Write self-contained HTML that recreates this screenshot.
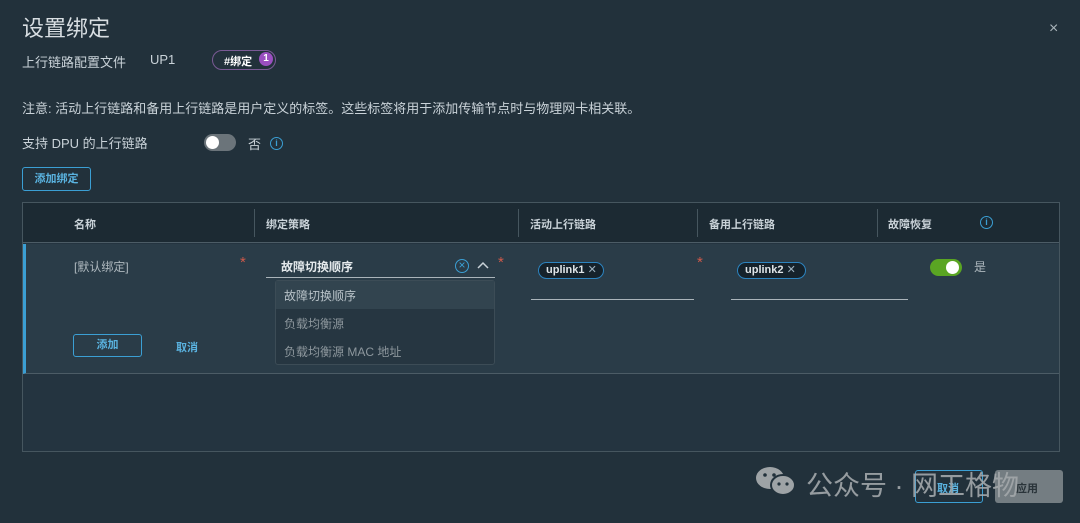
<!DOCTYPE html>
<html><head><meta charset="utf-8"><style>
*{margin:0;padding:0;box-sizing:border-box}
body{width:1080px;height:523px;background:#22313b;font-family:"Liberation Sans","Noto Sans CJK SC",sans-serif;color:#c9d2d8;position:relative;overflow:hidden}
.a{position:absolute;white-space:nowrap}
.b{font-weight:bold}
.s{font-size:15px;color:#d05a4a}
</style></head><body>
<div class="a" style="left:22px;top:11px;font-size:22px;color:#d8dee2">设置绑定</div>
<div class="a" style="left:1049px;top:20px;font-size:16px;color:#aab4ba">×</div>
<div class="a" style="left:22px;top:52px;font-size:13px">上行链路配置文件</div>
<div class="a" style="left:150px;top:52px;font-size:13px">UP1</div>
<div class="a" style="left:212px;top:50px;width:64px;height:20px;border:1.5px solid #7a5a95;border-radius:10px"></div>
<div class="a b" style="left:224px;top:53px;font-size:11px;color:#fff">#绑定</div>
<div class="a b" style="left:259px;top:52px;width:14px;height:14px;border-radius:7px;background:#9a4fc0;color:#fff;font-size:10px;text-align:center;line-height:14px">1</div>
<div class="a" style="left:22px;top:98px;font-size:13px">注意: 活动上行链路和备用上行链路是用户定义的标签。这些标签将用于添加传输节点时与物理网卡相关联。</div>
<div class="a" style="left:22px;top:133px;font-size:13px">支持 DPU 的上行链路</div>
<div class="a" style="left:204px;top:134px;width:32px;height:17px;border-radius:9px;background:#6b747a"></div>
<div class="a" style="left:206px;top:136px;width:13px;height:13px;border-radius:7px;background:#fff"></div>
<div class="a" style="left:248px;top:134px;font-size:13px">否</div>
<div class="a" style="left:270px;top:137px;width:13px;height:13px;border:1.5px solid #3b9fd4;border-radius:7px;color:#3b9fd4;font-size:9px;text-align:center;line-height:10px;font-weight:bold">i</div>
<div class="a b" style="left:22px;top:167px;width:69px;height:24px;border:1px solid #3b9fd4;border-radius:3px;color:#5ab3e0;font-size:11px;text-align:center;line-height:22px">添加绑定</div>

<div class="a" style="left:22px;top:202px;width:1038px;height:250px;border:1px solid #46565f;background:#243440"></div>
<div class="a" style="left:23px;top:203px;width:1036px;height:40px;background:#1c2a33;border-bottom:1px solid #4c5c66"></div>
<div class="a" style="left:254px;top:209px;width:1px;height:28px;background:#46565f"></div>
<div class="a" style="left:518px;top:209px;width:1px;height:28px;background:#46565f"></div>
<div class="a" style="left:697px;top:209px;width:1px;height:28px;background:#46565f"></div>
<div class="a" style="left:877px;top:209px;width:1px;height:28px;background:#46565f"></div>
<div class="a b" style="left:74px;top:216px;font-size:11px">名称</div>
<div class="a b" style="left:266px;top:216px;font-size:11px">绑定策略</div>
<div class="a b" style="left:530px;top:216px;font-size:11px">活动上行链路</div>
<div class="a b" style="left:709px;top:216px;font-size:11px">备用上行链路</div>
<div class="a b" style="left:888px;top:216px;font-size:11px">故障恢复</div>
<div class="a" style="left:980px;top:216px;width:13px;height:13px;border:1.5px solid #3b9fd4;border-radius:7px;color:#3b9fd4;font-size:9px;text-align:center;line-height:10px;font-weight:bold">i</div>

<div class="a" style="left:23px;top:244px;width:1036px;height:130px;background:#2a3c48;border-left:3px solid #3b9fd4;border-bottom:1px solid #4c5c66"></div>
<div class="a" style="left:74px;top:258px;font-size:12px;color:#aeb8be">[默认绑定]</div>
<div class="a s" style="left:240px;top:254px">*</div>
<div class="a b" style="left:281px;top:258px;font-size:12px;color:#e4e9ec">故障切换顺序</div>
<div class="a" style="left:266px;top:277px;width:229px;height:1px;background:#aab4ba"></div>
<div class="a" style="left:455px;top:259px;width:14px;height:14px;border:1.5px solid #3b9fd4;border-radius:7px;color:#3b9fd4;font-size:12px;line-height:11px;text-align:center">×</div>
<svg class="a" style="left:477px;top:261px" width="12" height="8" viewBox="0 0 12 8"><path d="M1 7 L6 2 L11 7" fill="none" stroke="#c9d2d8" stroke-width="1.5"/></svg>
<div class="a s" style="left:498px;top:254px">*</div>
<div class="a" style="left:275px;top:280px;width:220px;height:85px;background:#263641;border:1px solid #3c4c56;border-radius:3px"></div>
<div class="a" style="left:276px;top:281px;width:218px;height:28px;background:#32444f"></div>
<div class="a" style="left:284px;top:287px;font-size:12px;color:#b8c2c8">故障切换顺序</div>
<div class="a" style="left:284px;top:315px;font-size:12px;color:#8d979d">负载均衡源</div>
<div class="a" style="left:284px;top:343px;font-size:12px;color:#8d979d">负载均衡源 MAC 地址</div>
<div class="a b" style="left:73px;top:334px;width:69px;height:23px;border:1px solid #3b9fd4;border-radius:3px;color:#5ab3e0;font-size:11px;text-align:center;line-height:21px">添加</div>
<div class="a b" style="left:176px;top:339px;font-size:11px;color:#5ab3e0">取消</div>

<div class="a b" style="left:538px;top:262px;width:66px;height:17px;border:1px solid #2c84c0;border-radius:9px;background:#15222b;color:#dfe5e8;font-size:11px;line-height:15px;padding-left:7px">uplink1 <span style="color:#9fb2bf;font-weight:normal">✕</span></div>
<div class="a" style="left:531px;top:299px;width:163px;height:1px;background:#aab4ba"></div>
<div class="a s" style="left:697px;top:254px">*</div>
<div class="a b" style="left:737px;top:262px;width:69px;height:17px;border:1px solid #2c84c0;border-radius:9px;background:#15222b;color:#dfe5e8;font-size:11px;line-height:15px;padding-left:7px">uplink2 <span style="color:#9fb2bf;font-weight:normal">✕</span></div>
<div class="a" style="left:731px;top:299px;width:177px;height:1px;background:#aab4ba"></div>
<div class="a" style="left:930px;top:259px;width:32px;height:17px;border-radius:9px;background:#5aa523"></div>
<div class="a" style="left:946px;top:261px;width:13px;height:13px;border-radius:7px;background:#fff"></div>
<div class="a" style="left:974px;top:258px;font-size:12px;color:#aeb8be">是</div>

<div class="a" style="left:915px;top:470px;width:68px;height:33px;border:1px solid #3b9fd4;border-radius:3px"></div>
<div class="a b" style="left:937px;top:480px;font-size:11px;color:#5ab3e0">取消</div>
<div class="a" style="left:995px;top:470px;width:68px;height:33px;border-radius:3px;background:#747d82"></div>
<div class="a b" style="left:1016px;top:480px;font-size:11px;color:#2a343a">应用</div>
<svg class="a" style="left:755px;top:465px" width="42" height="32" viewBox="0 0 42 32"><ellipse cx="15" cy="13" rx="14" ry="11" fill="#9ea3a6"/><ellipse cx="28" cy="20" rx="12" ry="10" fill="#9ea3a6" stroke="#22313b" stroke-width="2"/><circle cx="10" cy="10" r="1.8" fill="#22313b"/><circle cx="19" cy="10" r="1.8" fill="#22313b"/><circle cx="24" cy="19" r="1.6" fill="#22313b"/><circle cx="32" cy="19" r="1.6" fill="#22313b"/></svg>
<div class="a" style="left:806px;top:464px;font-size:27px;color:#a3a8ab;opacity:.9">公众号 · 网工格物</div>
</body></html>
